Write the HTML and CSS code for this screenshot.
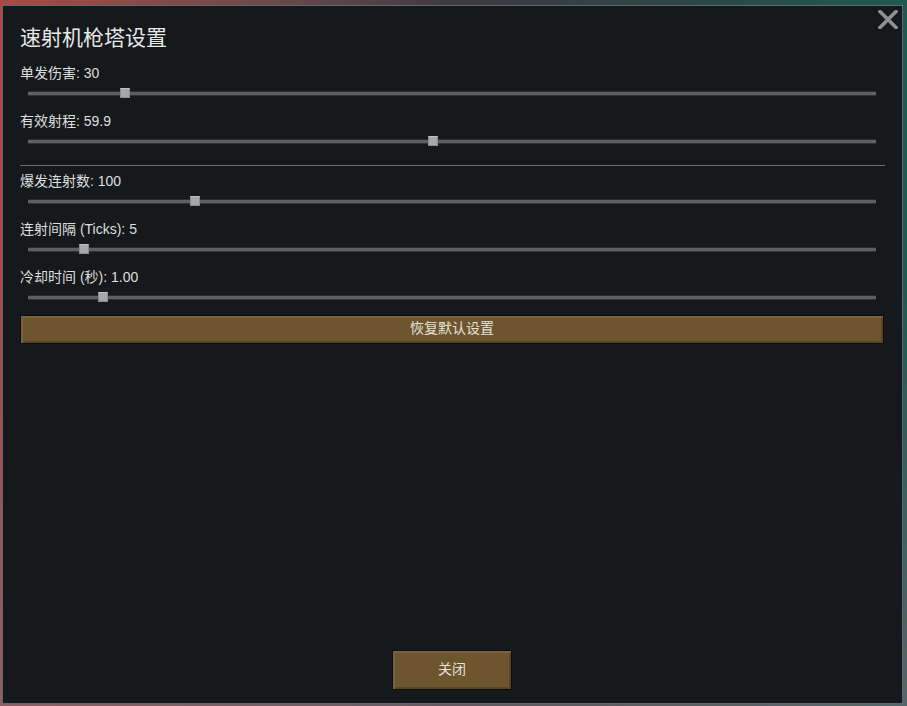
FILE: index.html
```html
<!DOCTYPE html>
<html lang="zh">
<head>
<meta charset="utf-8">
<title>速射机枪塔设置</title>
<link rel="stylesheet" href="styles.css">
</head>
<body>
<div class="backdrop">
  <div class="window">
    <button class="close-x" aria-label="关闭">
      <svg width="20" height="19" viewBox="0 0 20 19"><path d="M2 1.5 L18 17.5 M18 1.5 L2 17.5" stroke="#8d8f91" stroke-width="3.6" stroke-linecap="square"/></svg>
    </button>
    <h1 class="title">速射机枪塔设置</h1>
    <div class="setting">
      <div class="label">单发伤害: 30</div>
      <div class="slider"><div class="track"></div><div class="handle" style="left: 92px"></div></div>
    </div>
    <div class="setting">
      <div class="label">有效射程: 59.9</div>
      <div class="slider"><div class="track"></div><div class="handle" style="left: 400px"></div></div>
    </div>
    <div class="divider"></div>
    <div class="setting">
      <div class="label">爆发连射数: 100</div>
      <div class="slider"><div class="track"></div><div class="handle" style="left: 162px"></div></div>
    </div>
    <div class="setting">
      <div class="label">连射间隔 (Ticks): 5</div>
      <div class="slider"><div class="track"></div><div class="handle" style="left: 51px"></div></div>
    </div>
    <div class="setting">
      <div class="label">冷却时间 (秒): 1.00</div>
      <div class="slider"><div class="track"></div><div class="handle" style="left: 70px"></div></div>
    </div>
    <button class="btn btn-wide">恢复默认设置</button>
    <div class="spacer"></div>
    <div class="footer">
      <button class="btn btn-close">关闭</button>
    </div>
  </div>
</div>
</body>
</html>
```

FILE: styles.css
```css
* { box-sizing: border-box; }
html, body { margin: 0; padding: 0; }
body {
  width: 907px;
  height: 706px;
  overflow: hidden;
  font-family: "Liberation Sans", "Noto Sans CJK SC", sans-serif;
  background: linear-gradient(90deg, #a84a44 0%, #6a4a4c 30%, #3e3a40 50%, #2a4a44 80%, #1f5a4c 100%);
}
.backdrop {
  padding: 5px 4px 2px 2px;
  height: 706px;
  background: linear-gradient(180deg, transparent 0, transparent 40%, rgba(120,110,118,0.6) 100%);
}
.window {
  position: relative;
  width: 901px;
  height: 699px;
  background: #15191c;
  border: 1px solid #5f6870;
  padding: 0 17px 0 17px;
  display: flex;
  flex-direction: column;
  color: #dcdcdc;
}
.close-x {
  position: absolute;
  top: 3px;
  right: 3px;
  width: 22px;
  height: 21px;
  padding: 1px;
  border: 0;
  background: none;
  display: flex;
  align-items: center;
  justify-content: center;
}
.title {
  margin: 19px 0 0 0;
  font-size: 21px;
  line-height: 26px;
  font-weight: normal;
  color: #e8e8e8;
  height: 39px;
}
.setting { display: flex; flex-direction: column; margin-bottom: 8px; }
.label {
  font-size: 14px;
  line-height: 18px;
  height: 18px;
  color: #dedede;
  white-space: nowrap;
}
.slider {
  position: relative;
  height: 22px;
  margin: 0 9px 0 8px;
  display: flex;
  align-items: center;
}
.track {
  width: 100%;
  height: 5px;
  background: #5e5f60;
  border-top: 1px solid #2c2d2e;
  border-bottom: 1px solid #333435;
  border-radius: 1px;
}
.handle {
  position: absolute;
  top: 6px;
  width: 10px;
  height: 10px;
  background: #a6a7a8;
  border: 1px solid #8a8b8c;
  border-top-color: #c0c1c2;
}
.divider {
  height: 1px;
  background: #6a6d70;
  margin: 5px 0 6px 0;
}
.btn {
  font-family: "Liberation Sans", "Noto Sans CJK SC", sans-serif;
  font-size: 14px;
  line-height: 16px;
  color: #e6e2d8;
  background: #6c552f;
  border: 1px solid #0c0c0c;
  box-shadow: inset 2px 2px 0 #7a6138, inset -2px -2px 0 #57452a;
  padding: 0 0 3px 0;
  cursor: pointer;
}
.btn-wide {
  margin-top: -1px;
  width: 864px;
  height: 29px;
  margin-left: 0;
}
.spacer { flex: 1; }
.footer {
  display: flex;
  justify-content: center;
  padding: 0 0 13px 0;
}
.btn-close {
  width: 120px;
  height: 40px;
  margin-left: -1px;
}
```
